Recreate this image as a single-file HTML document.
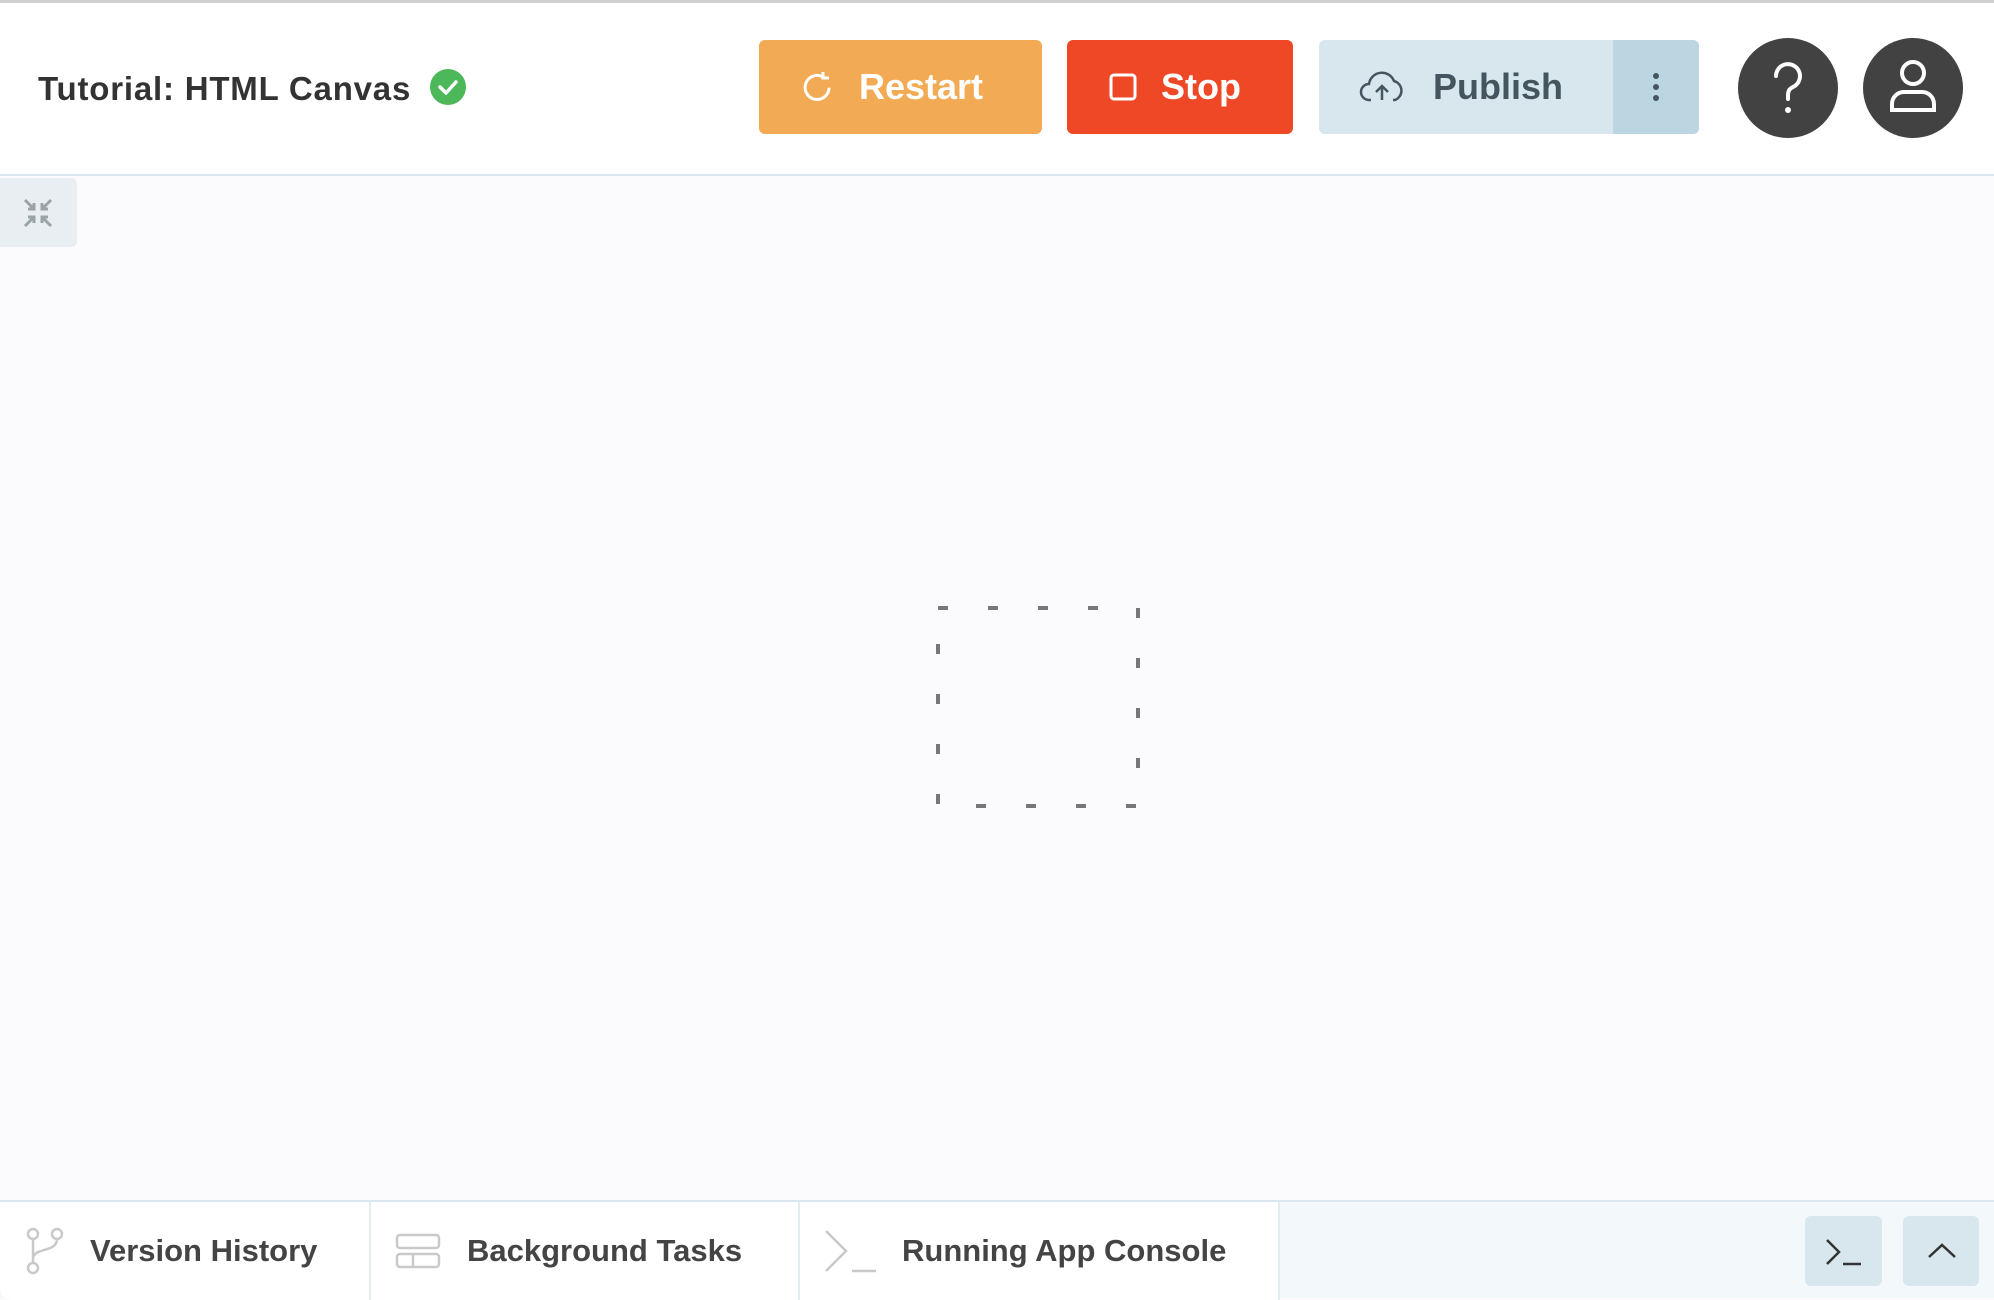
<!DOCTYPE html>
<html><head><style>
*{box-sizing:border-box;margin:0;padding:0}
body{width:1994px;height:1298px;overflow:hidden;background:#fbfafd;font-family:"Liberation Sans",sans-serif;position:relative}
.top{position:absolute;left:0;top:0;width:1994px;height:176px;background:#fff;border-top:3px solid #d0d0d0;border-bottom:2px solid #dbe7ee}
.abs{position:absolute}
.btn{position:absolute;top:37px;height:94px;border-radius:6px;display:flex;align-items:center;font-weight:bold;font-size:36px}
.bot{position:absolute;left:0;top:1200px;width:1994px;height:98px;background:#f3f8fb;border-top:2px solid #dbe7ee}
.tab{position:absolute;top:0;height:98px;background:#fff;border-right:2px solid #e3ecf1;display:flex;align-items:center;font-weight:bold;font-size:31px;color:#444}
</style></head><body>
<div class="top">
<div class="abs" style="left:38px;top:67px;font-size:33px;letter-spacing:0.8px;font-weight:bold;color:#333">Tutorial: HTML Canvas</div>
<svg class="abs" style="left:430px;top:66px" width="36" height="36"><circle cx="18" cy="18" r="18" fill="#4cb85a"/><path d="M10 18l6 6 10-11" stroke="#fff" stroke-width="3.5" fill="none" stroke-linecap="round" stroke-linejoin="round"/></svg>
<div class="btn" style="left:759px;width:283px;background:#f2aa55;color:#fff">
<svg style="margin-left:42px;margin-right:24px" width="34" height="34" viewBox="0 0 34 34"><path d="M28 19A12 12 0 1 1 22 7" stroke="#fff" stroke-width="3" fill="none" stroke-linecap="round"/><path d="M22 2v6h6" stroke="#fff" stroke-width="3" fill="none"/></svg>Restart</div>
<div class="btn" style="left:1067px;width:226px;background:#ee4827;color:#fff">
<svg style="margin-left:42px;margin-right:24px" width="28" height="28"><rect x="2" y="2" width="24" height="24" rx="3" stroke="#fff" stroke-width="3" fill="none"/></svg>Stop</div>
<div class="btn" style="left:1319px;width:380px;background:#d8e7ee;color:#45555f;overflow:hidden">
<svg style="margin-left:40px;margin-right:28px" width="46" height="34" viewBox="0 0 46 34"><path d="M12 30H10A8 8 0 0 1 10 14 13 13 0 0 1 35 11 10 10 0 0 1 36 30H34" stroke="#45555f" stroke-width="2.5" fill="none"/><path d="M23 30V16M17 22l6-6 6 6" stroke="#45555f" stroke-width="2.5" fill="none"/></svg>Publish
<div class="abs" style="left:294px;top:0;width:86px;height:94px;background:#bcd6e1"><div class="abs" style="left:40px;top:33px;width:6px;height:6px;border-radius:3px;background:#45555f;box-shadow:0 11px 0 #45555f,0 22px 0 #45555f"></div></div></div>
<svg class="abs" style="left:1738px;top:35px" width="100" height="100"><circle cx="50" cy="50" r="50" fill="#424242"/><path d="M38 38a12 12 0 1 1 17 11c-4 2-5 4-5 9v3" stroke="#fff" stroke-width="4" fill="none" stroke-linecap="round"/><circle cx="50" cy="72" r="3" fill="#fff"/></svg>
<svg class="abs" style="left:1863px;top:35px" width="100" height="100"><circle cx="50" cy="50" r="50" fill="#424242"/><circle cx="50" cy="35" r="11" stroke="#fff" stroke-width="4" fill="none"/><path d="M29 72v-6a12 12 0 0 1 12-12h18a12 12 0 0 1 12 12v6z" stroke="#fff" stroke-width="4" fill="none"/></svg>
</div>
<div class="abs" style="left:0;top:178px;width:77px;height:69px;background:#e9eef2;border-radius:0 6px 6px 0">
<svg class="abs" style="left:23px;top:20px" width="30" height="30" viewBox="0 0 30 30" stroke="#9aa3a8" stroke-width="3" fill="none"><path d="M2 2l9 9M5 11h6V5M28 2l-9 9M25 11h-6V5M2 28l9-9M5 19h6v6M28 28l-9-9M25 19h-6v6"/></svg></div>
<svg class="abs" style="left:935px;top:605px" width="206" height="204"><rect x="3" y="3" width="200" height="198" fill="none" stroke="#777" stroke-width="4" stroke-dasharray="10 40"/></svg>
<div class="bot">
<div class="tab" style="left:0;width:371px;border-radius:0 0 0 12px"><svg style="margin-left:24px;margin-right:24px" width="42" height="48" viewBox="0 0 42 48" stroke="#c9c9c9" stroke-width="2.5" fill="none"><circle cx="9" cy="7" r="5"/><circle cx="33" cy="7" r="5"/><circle cx="9" cy="41" r="5"/><path d="M9 12v24M33 12c0 14-24 8-24 20"/></svg>Version History</div>
<div class="tab" style="left:371px;width:429px"><svg style="margin-left:24px;margin-right:26px" width="46" height="36" viewBox="0 0 46 36" stroke="#c9c9c9" stroke-width="2.5" fill="none"><rect x="2" y="2" width="42" height="13" rx="3"/><rect x="2" y="21" width="42" height="13" rx="3"/><path d="M18 21v13"/></svg>Background Tasks</div>
<div class="tab" style="left:800px;width:480px"><svg style="margin-left:24px;margin-right:24px" width="54" height="44" viewBox="0 0 54 44" stroke="#c9c9c9" stroke-width="2.5" fill="none"><path d="M2 2l20 20L2 42M28 42h24"/></svg>Running App Console</div>
<div class="abs" style="left:1805px;top:14px;width:77px;height:70px;background:#d8e7ee;border-radius:6px"><svg class="abs" style="left:20px;top:22px" width="38" height="28" stroke="#333" stroke-width="2.5" fill="none"><path d="M2 2l12 12L2 26M18 26h18"/></svg></div>
<div class="abs" style="left:1903px;top:14px;width:76px;height:70px;background:#d8e7ee;border-radius:6px"><svg class="abs" style="left:24px;top:26px" width="30" height="18" stroke="#333" stroke-width="2.5" fill="none"><path d="M2 15L15 3l13 12"/></svg></div>
</div>
</body></html>
